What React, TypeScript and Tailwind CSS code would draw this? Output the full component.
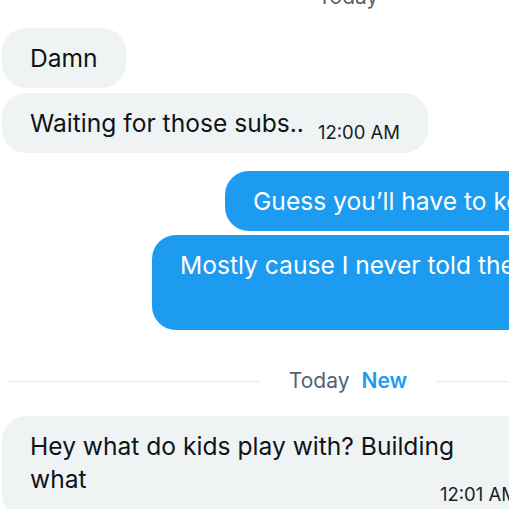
export default function App() {
  return (
    <div className="w-[509px] h-[509px] overflow-hidden bg-white">
      <div
        className="w-[696px] px-[2px] flex flex-col text-[#0f1419]"
        style={{ fontFamily: "Inter, 'Noto Sans', sans-serif" }}
      >
        {/* date header, cut off at the top */}
        <div className="-mt-[17px] text-center text-[21px] leading-[28px] text-[#536471]">
          Today
        </div>

        {/* received */}
        <div className="self-start mt-[17px] rounded-3xl bg-[#eff3f4] px-7 pt-[14px] pb-[13px]">
          <span className="text-[24.6px] leading-[33px]">Damn</span>
        </div>
        <div className="self-start mt-[5px] flex items-end rounded-3xl bg-[#eff3f4] px-7 pt-[14px] pb-[13px]">
          <span className="text-[24.6px] leading-[33px]">Waiting for those subs..</span>
          <span className="ml-[14px] -mb-1 text-[18.5px] leading-[24px] whitespace-nowrap text-[#1a1f24]">
            12:00 AM
          </span>
        </div>

        {/* sent */}
        <div className="self-end mt-[18px] w-[469px] overflow-hidden whitespace-nowrap rounded-3xl bg-[#1d9bf0] px-7 pt-[14px] pb-[13px] text-white">
          <span className="text-[24.6px] leading-[33px]">Guess you’ll have to keep waiting</span>
        </div>
        <div className="self-end mt-[4px] w-[542px] overflow-hidden whitespace-nowrap rounded-3xl bg-[#1d9bf0] px-7 pt-[14px] pb-[13px] text-white">
          <div className="text-[24.6px] leading-[33px]">Mostly cause I never told them to sub</div>
          <div className="mt-[11px] flex justify-end text-[18.5px] leading-[24px]">12:00 AM</div>
        </div>

        {/* divider */}
        <div className="mt-[37px] flex items-center px-[6px]">
          <div className="flex-1 h-px bg-[#e6eaec]" />
          <div className="flex items-center gap-3 px-[29px] text-[21px] leading-[28px]">
            <span className="text-[#536471]">Today</span>
            <span className="font-semibold text-[#1d9bf0]">New</span>
          </div>
          <div className="flex-1 h-px bg-[#e6eaec]" />
        </div>

        {/* received, new */}
        <div className="self-start mt-[21px] w-[544px] rounded-3xl bg-[#eff3f4] px-7 pt-[14px] pb-[13px]">
          <div className="text-[24.6px] leading-[33px]">
            Hey what do kids play with? Building
            <br />
            what
          </div>
          <div className="-mt-[14px] flex justify-end text-[18.5px] leading-[24px] text-[#1a1f24]">
            12:01 AM
          </div>
        </div>
      </div>
    </div>
  );
}
